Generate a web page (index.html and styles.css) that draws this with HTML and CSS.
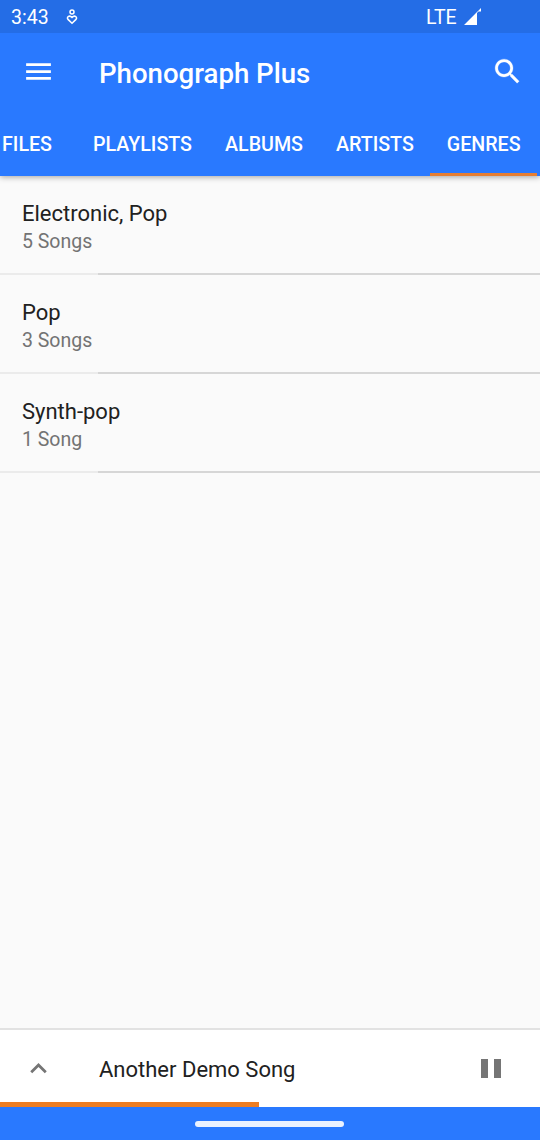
FILE: index.html
```html
<!DOCTYPE html>
<html lang="en">
<head>
<meta charset="utf-8">
<title>Phonograph Plus</title>
<link rel="stylesheet" href="styles.css">
</head>
<body>
<div class="app">
  <div class="status">
    <span class="clock">3:43</span>
    <svg class="notice" viewBox="0 0 12 16" fill="none" stroke="#fff" stroke-width="1.5"><circle cx="6" cy="3" r="2"/><path d="M6 14.2L2 10.4C.2 8.2 3.2 5.6 6 8.4c2.800-2.800 5.800-.2 4 2z"/></svg>
    <span class="network">LTE</span>
    <svg class="signal" viewBox="0 0 18 17" fill="#fff"><path d="M0 17L13 4v13zM12.500 4.500L17 0v3.500h-2.500L13 5z"/></svg>
  </div>
  <header class="header">
    <div class="toolbar">
      <svg class="icon" viewBox="0 0 24 24" fill="#fff"><path d="M3 18h18v-2H3v2zm0-5h18v-2H3v2zm0-7v2h18V6H3z"/></svg>
      <h1 class="title">Phonograph Plus</h1>
      <svg class="icon search" viewBox="0 0 24 24" fill="#fff" stroke="#fff" stroke-width=".2"><path d="M15.500 14h-.79l-.28-.27C15.410 12.590 16 11.110 16 9.500 16 5.910 13.090 3 9.500 3S3 5.910 3 9.500 5.910 16 9.500 16c1.610 0 3.090-.59 4.230-1.570l.27.28v.79l5 4.990L20.490 19l-4.990-5zm-6 0C7.010 14 5 11.990 5 9.500S7.010 5 9.500 5 14 7.010 14 9.500 11.990 14 9.500 14z"/></svg>
    </div>
    <nav class="tabs">
      <span class="tab first">FILES</span>
      <span class="tab">PLAYLISTS</span>
      <span class="tab">ALBUMS</span>
      <span class="tab">ARTISTS</span>
      <span class="tab active">GENRES</span>
    </nav>
  </header>
  <main class="list">
    <div class="row"><div class="name">Electronic, Pop</div><div class="count">5 Songs</div></div>
    <div class="row"><div class="name">Pop</div><div class="count">3 Songs</div></div>
    <div class="row"><div class="name">Synth-pop</div><div class="count">1 Song</div></div>
  </main>
  <section class="player">
    <svg class="icon" viewBox="0 0 24 24" fill="#757575"><path d="M7.410 15.410L12 10.830l4.590 4.580L18 14l-6-6-6 6z"/></svg>
    <span class="song">Another Demo Song</span>
    <svg class="pause" viewBox="0 0 20 19" fill="#757575"><path d="M0 0h7v19H0zM13 0h7v19h-7z"/></svg>
    <div class="progress" style="width:48%"></div>
  </section>
  <footer class="navbar"><div class="handle"></div></footer>
</div>
</body>
</html>
```

FILE: styles.css
```css
* { box-sizing: border-box; }
body { margin: 0; font-family: Roboto, "Liberation Sans", sans-serif; }
.app { width: 540px; height: 1140px; display: flex; flex-direction: column; background: #fafafa; overflow: hidden; }
.status { position: relative; z-index: 2; height: 33px; flex: none; display: flex; align-items: center; padding-left: 11px; background: #246de6; color: #fff; font-size: 19.5px; line-height: 33px; }
.clock { width: 55px; padding-top: 1px; }
.notice { width: 12px; height: 16px; }
.network { margin-left: 348px; width: 38px; padding-top: 1px; }
.signal { width: 18px; height: 17px; }
.header { position: relative; height: 143px; flex: none; background: #2979ff; color: #fff; box-shadow: 0 1px 6px rgba(0,0,0,.36); z-index: 1; }
.toolbar { height: 77px; display: flex; align-items: center; padding: 0 16.5px 0 22px; }
.icon { width: 33px; height: 33px; flex: none; }
.title { margin: 4px 0 0 44px; flex: 1; font-size: 27.6px; font-weight: 500; line-height: 37px; }
.tabs { height: 66px; display: flex; margin-left: -22.5px; }
.tab { flex: none; padding: 0 16.5px; font-size: 19.65px; font-weight: 500; line-height: 69px; text-align: center; }
.first { width: 99px; }
.active { height: 66px; border-bottom: 3px solid #e67e32; }
.list { flex: 1; }
.row { height: 99px; padding: 24px 22px 0; border-bottom: 2px solid; border-image: linear-gradient(to right, #ebebeb 99px, #d6d6d6 99px) 2; }
.name { font-size: 22px; line-height: 28px; color: #212121; }
.count { font-size: 19.5px; line-height: 27px; color: #737373; }
.player { position: relative; height: 79px; flex: none; display: flex; align-items: center; padding: 0 39px 0 22px; background: #fff; border-top: 2px solid #e2e2e2; }
.song { flex: 1; margin-left: 44px; padding-top: 2px; font-size: 22px; color: #212121; }
.pause { width: 20px; height: 19px; }
.progress { position: absolute; left: 0; bottom: 0; height: 5px; background: #ed7d22; }
.navbar { height: 33px; flex: none; display: flex; align-items: center; justify-content: center; padding-right: 1px; background: #2979ff; }
.handle { width: 149px; height: 6px; border-radius: 3px; background: #eaf2ff; }
```
